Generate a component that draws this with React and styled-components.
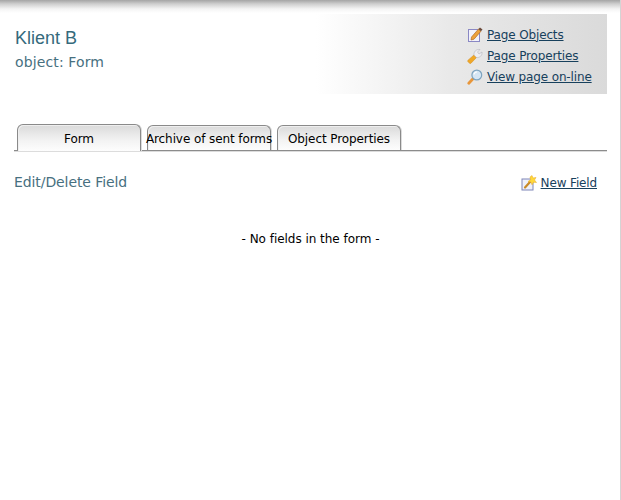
import React from 'react';
import styled, { createGlobalStyle } from 'styled-components';

const Global = createGlobalStyle`
    html, body {
        margin: 0;
        padding: 0;
        background: #fff;
    }
    body {
        font-family: "DejaVu Sans", Tahoma, sans-serif;
        font-size: 12px;
        color: #000;
    }
`

const Page = styled.div`
    width: 621px;
    height: 500px;
    overflow: hidden;
    background: linear-gradient(to bottom, #a4a4a4 0, #cfcfcf 4px, #f4f4f4 9px, #fff 13px);
    padding: 14px 13px 0 0;
    border-right: 1px solid #d4d4d4;
    box-sizing: border-box;
`

const Header = styled.header`
    display: flex;
    justify-content: space-between;
    height: 80px;
    background: linear-gradient(to right, #fff 52%, #e9e9e9 74%, #dadada 100%);
`

const Titles = styled.div`
    padding: 13px 0 0 15px;
`

const Title = styled.h1`
    margin: 0;
    font: normal 18px/22px "Liberation Sans", Arial, sans-serif;
    color: #356a7c;
`

const Subtitle = styled.h2`
    margin: 4px 0 0;
    font: normal 14px/18px "DejaVu Sans", Tahoma, sans-serif;
    letter-spacing: 0.13px;
    color: #47707f;
`

const LinkList = styled.ul`
    list-style: none;
    margin: 0;
    padding: 10px 17px 0 0;
    width: 123px;
`

const LinkRow = styled.li`
    display: flex;
    align-items: center;
    gap: 4px;
    height: 21px;
`

const IconBox = styled.svg`
    width: 16px;
    height: 16px;
    flex: none;
`

const Anchor = styled.a`
    color: #17405c;
    text-decoration: underline;
    font-size: 12px;
    letter-spacing: -0.14px;
    white-space: nowrap;
    cursor: pointer;
`

const TabBar = styled.nav`
    display: flex;
    align-items: flex-end;
    height: 26px;
    margin: 30px 0 0 14px;
    padding-left: 3px;
    border-bottom: 1px solid #8c8c8c;
    box-shadow: 0 1px 0 #dcdcdc;
    gap: 6px;
`

const Tab = styled.div`
    box-sizing: border-box;
    width: 124px;
    height: ${p => (p.$active ? 27 : 25)}px;
    margin-bottom: ${p => (p.$active ? -1 : 0)}px;
    display: flex;
    align-items: center;
    justify-content: center;
    border: 1px solid #8a8a8a;
    border-bottom: none;
    border-radius: 6px 6px 0 0;
    background: linear-gradient(to bottom, #dadada, #f3f3f3 60%, #fdfdfd);
    box-shadow: inset 1px 1px 0 #efefef, 1px 0 0 #dcdcdc;
    white-space: nowrap;
    letter-spacing: -0.09px;
    color: #000;
    span {
        position: relative;
        top: 1px;
    }
`

const Content = styled.main`
    padding-right: 10px;
`

const SectionRow = styled.div`
    display: flex;
    justify-content: space-between;
    align-items: center;
    padding: 22px 0 0 14px;
`

const SectionTitle = styled.h3`
    margin: 0;
    font: normal 14px/18px "DejaVu Sans", Tahoma, sans-serif;
    letter-spacing: -0.09px;
    color: #47707f;
`

const NewField = styled.div`
    display: flex;
    align-items: center;
    gap: 4px;
    padding-top: 1px;
`

const Empty = styled.p`
    margin: 40px 0 0;
    padding-left: 24px;
    text-align: center;
    line-height: 16px;
    letter-spacing: -0.03px;
`

const EditIcon = () => (
    <IconBox viewBox="0 0 16 16">
        <rect x="1.5" y="2.5" width="11" height="12" fill="#f2f2fb" stroke="#8a88c4" />
        <path d="M4.5 10 L11.5 2 L14 4.2 L7 12.2 L4 13 Z" fill="#eda23c" stroke="#a85f1c" strokeWidth=".6" />
        <path d="M11.5 2 L13 .5 L15.5 2.6 L14 4.2 Z" fill="#6b4a3a" />
    </IconBox>
)

const WrenchIcon = () => (
    <IconBox viewBox="0 0 16 16">
        <path d="M.8 13.5 L2.8 15.5 Q3.5 15.8 4.2 15 L10 9 L7.5 6.5 L1 12.2 Q.5 12.8 .8 13.5 Z" fill="#f0a828" stroke="#d08a1c" strokeWidth=".5" />
        <path d="M7 7 C6.5 4 9 1 13 1.5 L10.5 4 L12 6 L15 4 C15.5 7.5 12.5 10 9.5 9.5 Z" fill="#eeeef2" stroke="#b4b4bc" strokeWidth=".6" />
    </IconBox>
)

const SearchIcon = () => (
    <IconBox viewBox="0 0 16 16">
        <path d="M1.8 14.2 L6 9.8" stroke="#e8963a" strokeWidth="2.8" strokeLinecap="round" />
        <circle cx="9.8" cy="6" r="4.9" fill="#d6e6f4" stroke="#7ea4bf" strokeWidth="1.2" />
        <path d="M7 5.5 A3 3 0 0 1 10 3" stroke="#fff" strokeWidth="1.2" fill="none" />
    </IconBox>
)

const WandIcon = () => (
    <IconBox viewBox="0 0 16 16">
        <rect x="1" y="4" width="11" height="11" fill="#eef0fa" stroke="#7f86b8" />
        <path d="M4 12.5 L9 7" stroke="#c88a2a" strokeWidth="2.2" strokeLinecap="round" />
        <path d="M11 0.5 L12 3 L15 2.5 L13.5 5 L15.5 7.5 L12.5 7.3 L11 9.8 L10 7 L7 6.5 L9.5 4.8 L9 2 Z" fill="#ffd83a" stroke="#e8a820" strokeWidth=".5" />
    </IconBox>
)

const App = () => (
    <Page>
        <Global />
        <Header>
            <Titles>
                <Title>Klient B</Title>
                <Subtitle>object: Form</Subtitle>
            </Titles>
            <LinkList>
                <LinkRow><EditIcon /><Anchor>Page Objects</Anchor></LinkRow>
                <LinkRow><WrenchIcon /><Anchor>Page Properties</Anchor></LinkRow>
                <LinkRow><SearchIcon /><Anchor>View page on-line</Anchor></LinkRow>
            </LinkList>
        </Header>
        <TabBar>
            <Tab $active><span>Form</span></Tab>
            <Tab><span>Archive of sent forms</span></Tab>
            <Tab><span>Object Properties</span></Tab>
        </TabBar>
        <Content>
            <SectionRow>
                <SectionTitle>Edit/Delete Field</SectionTitle>
                <NewField><WandIcon /><Anchor>New Field</Anchor></NewField>
            </SectionRow>
            <Empty>- No fields in the form -</Empty>
        </Content>
    </Page>
)

export default App;
